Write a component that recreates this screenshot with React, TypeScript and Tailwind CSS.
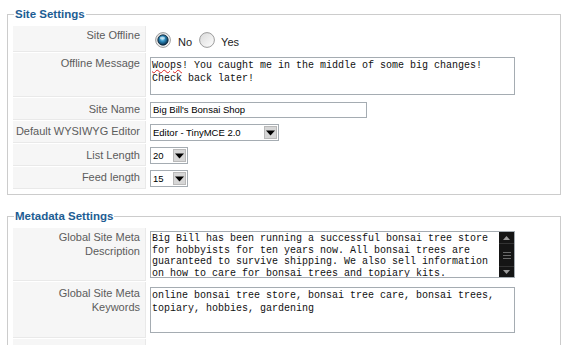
import React from 'react';

/**
 * Global configuration panel: site + metadata settings
 */

const Radio: React.FC<{ checked?: boolean }> = ({ checked }) => (
  <svg width="16" height="16" viewBox="0 0 16 16" className="shrink-0">
    <defs>
      <linearGradient id="ringOff" x1="0" y1="0" x2="1" y2="1">
        <stop offset="0" stopColor="#d9d9d9" />
        <stop offset="1" stopColor="#ffffff" />
      </linearGradient>
      <radialGradient id="dotOn" cx="45%" cy="40%" r="60%">
        <stop offset="0" stopColor="#8fd8f5" />
        <stop offset="0.45" stopColor="#2a86b8" />
        <stop offset="1" stopColor="#0b2a44" />
      </radialGradient>
    </defs>
    <circle cx="8" cy="8" r="7.4" fill="url(#ringOff)" stroke="#9c9c9c" strokeWidth="1" />
    {checked && (
      <>
        <circle cx="8" cy="8" r="5.2" fill="url(#dotOn)" stroke="#0c2336" strokeWidth="0.8" />
        <ellipse cx="7.4" cy="6" rx="2.6" ry="1.5" fill="#ffffff" opacity="0.55" />
      </>
    )}
  </svg>
);

const Select: React.FC<{ value: string; wide?: boolean }> = ({ value, wide }) => (
  <div
    className={
      wide
        ? 'flex h-[17px] w-[129px] items-center border border-[#a5acb2] bg-white'
        : 'flex h-[17px] w-[38px] items-center border border-[#a5acb2] bg-white'
    }
  >
    <span className="flex-1 pl-[2px] text-[9.5px] leading-[15px] text-black">{value}</span>
    <span className="mr-[1px] flex h-[13px] w-[13px] items-center justify-center border border-[#b9b9b9] bg-[#d6d6d6]">
      <svg width="9" height="6" viewBox="0 0 9 6">
        <path d="M0 0.5 H9 L4.5 5.5 Z" fill="#000" />
      </svg>
    </span>
  </div>
);

const ScrollBar: React.FC = () => (
  <div className="flex w-[15px] shrink-0 flex-col bg-[#151515]">
    <div className="flex h-[12px] items-center justify-center border-b border-[#333]">
      <svg width="7" height="4" viewBox="0 0 7 4">
        <path d="M0 4 L3.5 0 L7 4 Z" fill="#9a9a9a" />
      </svg>
    </div>
    <div className="flex flex-1 flex-col items-center justify-center gap-[2px] border-b border-[#333]">
      <div className="h-px w-[8px] bg-[#6a6a6a]" />
      <div className="h-px w-[8px] bg-[#6a6a6a]" />
      <div className="h-px w-[8px] bg-[#6a6a6a]" />
    </div>
    <div className="flex h-[10px] items-center justify-center">
      <svg width="7" height="4" viewBox="0 0 7 4">
        <path d="M0 0 L7 0 L3.5 4 Z" fill="#9a9a9a" />
      </svg>
    </div>
  </div>
);

const labelCls =
  'w-[133px] shrink-0 border-b border-r border-[#e9e9e9] bg-[#f6f6f6] pr-[5px] text-right text-[11px] leading-[14px] text-[#5c5c5c]';

const monoCls = "font-['Liberation_Mono','Courier_New',monospace] text-[10px] text-[#111]";

export default function App() {
  return (
    <div className="min-h-[420px] bg-white font-['Liberation_Sans',Arial,sans-serif]">
      <fieldset className="mx-[7px] mt-[7px] border border-[#cccccc] px-[5px] pb-[5px]">
        <legend className="ml-px px-px text-[11.5px] font-bold leading-[14px] text-[#1d5d93]">Site Settings</legend>
        <div className="mt-[5px] flex flex-col gap-px">
          <div className="flex h-[26px] gap-px">
            <div className={labelCls + ' pt-[2px]'}>Site Offline</div>
            <div className="flex flex-1 items-center pl-[8px] pt-[1px] text-[11px] text-[#222]">
              <Radio checked />
              <span className="ml-[7px] pt-[5px]">No</span>
              <span className="ml-[7px]">
                <Radio />
              </span>
              <span className="ml-[6px] pt-[5px]">Yes</span>
            </div>
          </div>

          <div className="flex h-[44px] gap-px">
            <div className={labelCls + ' pt-[3px]'}>Offline Message</div>
            <div className="flex-1 pl-[3px] pt-[4px]">
              <div className={monoCls + ' h-[38px] w-[365px] border border-[#a5acb2] bg-white px-[1px] pt-[1px] leading-[13px]'}>
                <span className="underline decoration-[#d22] decoration-wavy decoration-1 underline-offset-1">Woops</span>! You caught me in the middle of some big changes!
                <br />
                Check back later!
              </div>
            </div>
          </div>

          <div className="flex h-[22px] gap-px">
            <div className={labelCls + ' pt-[4px]'}>Site Name</div>
            <div className="flex-1 pl-[3px] pt-[4px]">
              <div className="h-[16px] w-[217px] border border-[#a5acb2] bg-white pl-[2px] text-[9.5px] leading-[14px] text-black">
                Big Bill's Bonsai Shop
              </div>
            </div>
          </div>

          <div className="flex h-[22px] gap-px">
            <div className={labelCls + ' pt-[3px]'}>Default WYSIWYG Editor</div>
            <div className="flex-1 pl-[3px] pt-[3px]">
              <Select value="Editor - TinyMCE 2.0" wide />
            </div>
          </div>

          <div className="flex h-[22px] gap-px">
            <div className={labelCls + ' pt-[4px]'}>List Length</div>
            <div className="flex-1 pl-[3px] pt-[3px]">
              <Select value="20" />
            </div>
          </div>

          <div className="flex h-[22px] gap-px">
            <div className={labelCls + ' pt-[3px]'}>Feed length</div>
            <div className="flex-1 pl-[3px] pt-[3px]">
              <Select value="15" />
            </div>
          </div>
        </div>
      </fieldset>

      <fieldset className="mx-[7px] mt-[14px] border border-[#cccccc] px-[5px] pb-[5px]">
        <legend className="ml-px px-px text-[11.5px] font-bold leading-[14px] text-[#1d5d93]">Metadata Settings</legend>
        <div className="mt-[5px] flex flex-col gap-px">
          <div className="flex h-[53px] gap-px">
            <div className={labelCls + ' pt-[2px]'}>
              Global Site Meta
              <br />
              Description
            </div>
            <div className="flex-1 pl-[3px] pt-[3px]">
              <div className="flex h-[47px] w-[365px] border border-[#a5acb2] bg-white">
                <div className={monoCls + ' flex-1 overflow-hidden px-[1px] pt-[1px] leading-[11.5px]'}>
                  Big Bill has been running a successful bonsai tree store
                  <br />
                  for hobbyists for ten years now. All bonsai trees are
                  <br />
                  guaranteed to survive shipping. We also sell information
                  <br />
                  on how to care for bonsai trees and topiary kits.
                </div>
                <ScrollBar />
              </div>
            </div>
          </div>

          <div className="flex h-[56px] gap-px">
            <div className={labelCls + ' pt-[4px]'}>
              Global Site Meta
              <br />
              Keywords
            </div>
            <div className="flex-1 pl-[3px] pt-[5px]">
              <div className={monoCls + ' h-[46px] w-[365px] border border-[#a5acb2] bg-white px-[1px] pt-[1px] leading-[13px]'}>
                online bonsai tree store, bonsai tree care, bonsai trees,
                <br />
                topiary, hobbies, gardening
              </div>
            </div>
          </div>

          <div className="flex h-[26px] gap-px">
            <div className={labelCls} />
            <div className="flex-1" />
          </div>
        </div>
      </fieldset>
    </div>
  );
}
